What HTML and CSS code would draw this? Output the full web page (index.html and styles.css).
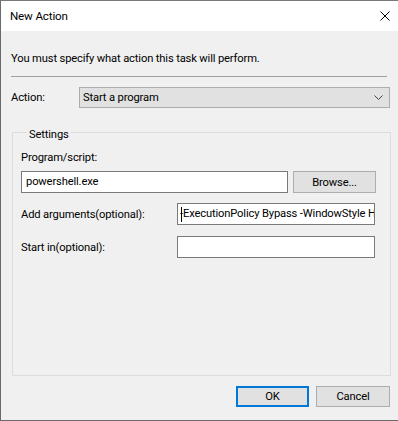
FILE: index.html
```html
<!DOCTYPE html>
<html lang="en">
<head>
<meta charset="UTF-8"/>
<title>New Action</title>
<link rel="stylesheet" href="styles.css">
</head>
<body>
<div class="window">
  <div class="titlebar">
    <span class="title">New Action</span>
    <svg class="close" width="10" height="10" viewBox="0 0 10 10"><path d="M0.5 0.5L9.5 9.5M9.5 0.5L0.5 9.5" stroke="#000" stroke-width="1" fill="none"/></svg>
  </div>
  <div class="content">
    <p class="intro">You must specify what action this task will perform.</p>
    <div class="sep"></div>
    <div class="action-row">
      <span class="action-label">Action:</span>
      <div class="combo">
        <span>Start a program</span>
        <svg width="9" height="5" viewBox="0 0 9 5"><path d="M0.5 0.5L4.5 4.5L8.5 0.5" stroke="#444" stroke-width="1" fill="none"/></svg>
      </div>
    </div>
    <fieldset class="group">
      <legend>Settings</legend>
      <div class="field-label">Program/script:</div>
      <div class="prog-row">
        <div class="input prog">powershell.exe</div>
        <div class="btn browse">Browse...</div>
      </div>
      <div class="row">
        <span class="row-label">Add arguments(optional):</span>
        <div class="input short"><span class="caret"></span><span class="scrolled">-ExecutionPolicy Bypass -WindowStyle Hidden</span></div>
      </div>
      <div class="row">
        <span class="row-label">Start in(optional):</span>
        <div class="input short"></div>
      </div>
    </fieldset>
    <div class="buttons">
      <div class="btn ok">OK</div>
      <div class="btn cancel">Cancel</div>
    </div>
  </div>
</div>
</body>
</html>
```

FILE: styles.css
```css
*{box-sizing:border-box;margin:0;padding:0}
body{width:398px;height:421px;overflow:hidden;font-family:Roboto,'Liberation Sans',sans-serif;font-size:11.2px;letter-spacing:-0.15px;color:#000}
.window{height:421px;display:flex;flex-direction:column;border-top:1px solid #7a7a7a;border-left:1px solid #6a6a6a;border-bottom:1px solid #6a6a6a}
.titlebar{height:30px;background:#fff;display:flex;align-items:center;padding:0 7px 0 9px;flex-shrink:0}
.title{flex:1;line-height:15px;padding-top:1px;font-size:11.6px}
.close{margin-right:1px}
.content{flex:1;background:#f0f0f0;padding:0 8px 0 10px;display:flex;flex-direction:column}
.intro{line-height:15px;margin-top:20px}
.sep{height:1px;background:#a0a0a0;margin:10px 3px 0 0}
.action-row{display:flex;align-items:center;margin-top:10px}
.action-label{width:68px;line-height:15px}
.combo{flex:1;height:21px;background:#e1e1e1;border:1px solid #adadad;display:flex;align-items:center;justify-content:space-between;padding:0 6px 0 3px}
.combo svg{display:block}
.group{margin-top:14px;margin-left:1px;border:1px solid #dcdcdc;height:254px;padding:0 14px 0 8px}
.group legend{margin-left:6px;padding:5px 2px 0;line-height:15px}
.field-label{line-height:15px;margin-top:8px}
.prog-row{display:flex;gap:5px;margin-top:6px}
.input{height:22px;background:#fff;border:1px solid #7a7a7a;line-height:20px;padding:0 4px;white-space:nowrap;overflow:hidden}
.prog{width:267px}
.btn{height:22px;background:#e1e1e1;border:1px solid #adadad;display:flex;align-items:center;justify-content:center}
.browse{width:83px}
.row{display:flex;align-items:center;margin-top:10px}
.row + .row{margin-top:11px}
.row-label{width:156px;line-height:15px}
.short{width:198px;position:relative;padding-left:2px}
.caret{position:absolute;left:3px;top:3px;width:1px;height:15px;background:#000}
.buttons{display:flex;justify-content:flex-end;gap:7px;margin-top:10px}
.buttons .btn{height:21px}
.ok{width:73px;border:2px solid #0078d7}
.cancel{width:74px}
```
